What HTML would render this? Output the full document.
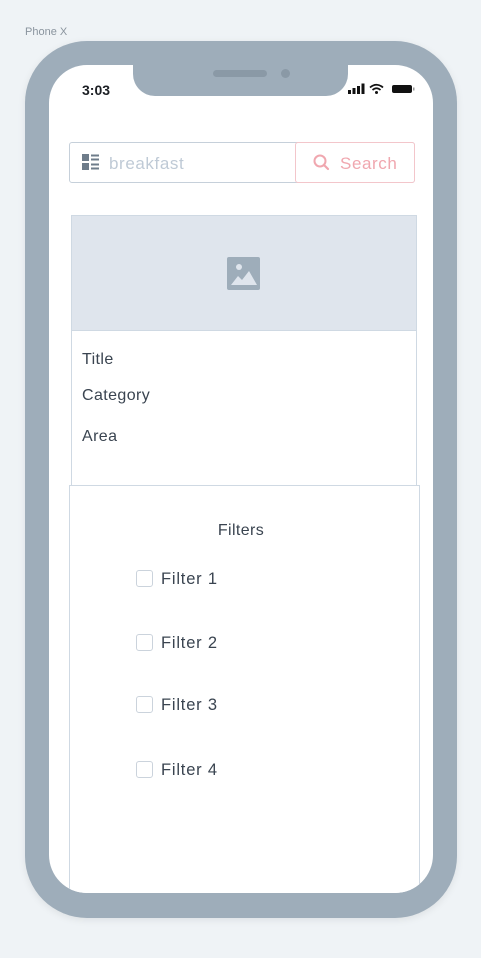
<!DOCTYPE html>
<html><head><meta charset="utf-8"><style>
*{margin:0;padding:0;box-sizing:border-box}
body{width:481px;height:958px;background:#eff3f6;position:relative;overflow:hidden;font-family:"Liberation Sans",sans-serif}
.lbl{position:absolute;left:25px;top:26px;font-size:11px;color:#8a949e}
.phone{position:absolute;left:25px;top:41px;width:432px;height:877px;background:#9eadba;border-radius:62px;box-shadow:0 2px 8px rgba(0,0,0,.08)}
.screen{position:absolute;left:49px;top:65px;width:384px;height:828px;background:#fff;border-radius:38px;overflow:hidden}
.notch{position:absolute;left:84px;top:0;width:215px;height:31px;background:#9eadba;border-radius:0 0 22px 22px}
.spk{position:absolute;left:164px;top:5px;width:54px;height:7px;border-radius:4px;background:#8a99a6}
.cam{position:absolute;left:232px;top:4px;width:9px;height:9px;border-radius:50%;background:#8a99a6}
.time{position:absolute;left:33px;top:17px;font-size:14px;font-weight:bold;color:#1c1f24}
.abs{position:absolute}
.t{position:absolute;font-size:16px;color:#3a4450;letter-spacing:.4px}
.cb{position:absolute;left:87px;width:17px;height:17px;border:1.5px solid #cbd3dc;border-radius:3px}
.f{font-size:16.5px;letter-spacing:.8px}
</style></head><body>
<div class="lbl">Phone X</div>
<div class="phone"></div>
<div class="screen">
  <div class="notch"></div>
  <div class="spk"></div><div class="cam"></div>
  <div class="time">3:03</div>
  <svg class="abs" style="left:299px;top:18px" width="68" height="12" viewBox="0 0 68 12">
    <rect x="0" y="7" width="3" height="4" fill="#111"/><rect x="4.5" y="5" width="3" height="6" fill="#111"/><rect x="9" y="3" width="3" height="8" fill="#111"/><rect x="13.5" y="0.5" width="3" height="10.5" fill="#111"/>
    <path d="M22 4.5 Q28.5 -1 35 4.5" stroke="#111" stroke-width="1.8" fill="none"/><path d="M24.5 7 Q28.5 3.5 32.5 7" stroke="#111" stroke-width="1.8" fill="none"/><circle cx="28.5" cy="9.5" r="1.5" fill="#111"/>
    <rect x="44" y="2" width="20" height="8" rx="2" fill="#111"/><rect x="65" y="4.5" width="1.5" height="3" fill="#999"/>
  </svg>
  <div class="abs" style="left:20px;top:77px;width:346px;height:41px;border:1.5px solid #c6d0da;border-radius:3px"></div>
  <div class="abs" style="left:246px;top:77px;width:120px;height:41px;border:1.5px solid #f3c6cb;border-radius:3px;background:#fff"></div>
  <svg class="abs" style="left:33px;top:89px" width="18" height="16" viewBox="0 0 18 16">
    <rect x="0" y="0" width="7" height="7" fill="#6e7c8a"/><rect x="0" y="9" width="7" height="7" fill="#6e7c8a"/>
    <rect x="9" y="0.5" width="8" height="2" fill="#6e7c8a"/><rect x="9" y="4.5" width="8" height="2" fill="#6e7c8a"/><rect x="9" y="9.5" width="8" height="2" fill="#6e7c8a"/><rect x="9" y="13.5" width="8" height="2" fill="#6e7c8a"/>
  </svg>
  <div class="abs" style="left:60px;top:89px;font-size:17px;color:#bfcad6;letter-spacing:.6px">breakfast</div>
  <svg class="abs" style="left:264px;top:89px" width="17" height="17" viewBox="0 0 17 17"><circle cx="7" cy="7" r="5.5" stroke="#f0a7af" stroke-width="2" fill="none"/><path d="M11 11 L15 15" stroke="#f0a7af" stroke-width="2.2" stroke-linecap="round"/></svg>
  <div class="abs" style="left:291px;top:89px;font-size:17px;color:#f0a7af;letter-spacing:.6px">Search</div>
  <div class="abs" style="left:22px;top:150px;width:346px;height:271px;border:1.5px solid #cfd9e3;background:#fff"></div>
  <div class="abs" style="left:22px;top:150px;width:346px;height:116px;background:#dfe5ed;border:1.5px solid #cfd9e3"></div>
  <svg class="abs" style="left:178px;top:192px" width="33" height="33" viewBox="0 0 33 33"><rect width="33" height="33" rx="2" fill="#9eadba"/><circle cx="12" cy="10" r="3" fill="#dfe5ed"/><path d="M4 28 L11 19 L15 23 L22 14 L30 28 Z" fill="#dfe5ed"/></svg>
  <div class="t" style="left:33px;top:286px">Title</div>
  <div class="t" style="left:33px;top:322px">Category</div>
  <div class="t" style="left:33px;top:363px">Area</div>
  <div class="abs" style="left:20px;top:420px;width:351px;height:420px;border:1.5px solid #cfd9e3;background:#fff"></div>
  <div class="t" style="left:0;width:384px;text-align:center;top:457px">Filters</div>
  <div class="cb" style="top:505px"></div><div class="t f" style="left:112px;top:505px">Filter 1</div>
  <div class="cb" style="top:569px"></div><div class="t f" style="left:112px;top:569px">Filter 2</div>
  <div class="cb" style="top:631px"></div><div class="t f" style="left:112px;top:631px">Filter 3</div>
  <div class="cb" style="top:696px"></div><div class="t f" style="left:112px;top:696px">Filter 4</div>
</div>
</body></html>
